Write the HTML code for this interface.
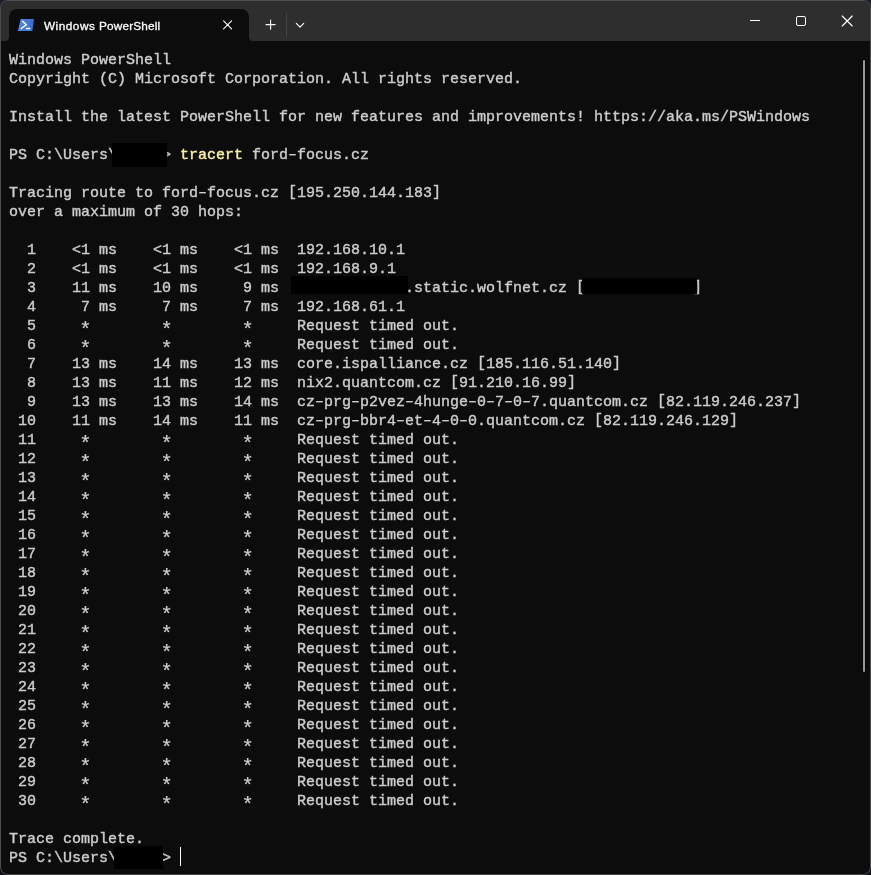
<!DOCTYPE html>
<html lang="en">
<head>
<meta charset="utf-8">
<title>Windows PowerShell</title>
<style>
html,body{margin:0;padding:0;}
body{width:871px;height:875px;overflow:hidden;background:linear-gradient(#1c1e2a 0,#1c1e2a 50%,#0e1014 50%,#0e1014 100%);position:relative;}
.win{position:absolute;left:0;top:0;width:869px;height:873px;border:1px solid;border-color:#4f4f54 #4c4d4f #444444 #4c4e4d;border-radius:8px;background:#0c0c0c;overflow:hidden;}
.titlebar{position:absolute;left:0;top:0;width:869px;height:40px;background:#2e2e2e;}
.tab{position:absolute;left:8px;top:8px;width:240px;height:32px;background:#0c0c0c;border-radius:8px 8px 0 0;}
.tab:before,.tab:after{content:"";position:absolute;bottom:0;width:4px;height:4px;}
.tab:before{left:-4px;background:radial-gradient(circle at 0 0,rgba(12,12,12,0) 3.5px,#0c0c0c 4.5px);}
.tab:after{right:-4px;background:radial-gradient(circle at 100% 0,rgba(12,12,12,0) 3.5px,#0c0c0c 4.5px);}
.tabtitle{position:absolute;left:35px;top:9px;font:11.8px/16px "Liberation Sans",sans-serif;color:#fff;white-space:nowrap;letter-spacing:0.33px;will-change:transform;-webkit-text-stroke:0.3px;}
.ico{position:absolute;}
.sep{position:absolute;left:285px;top:12px;width:1px;height:24px;background:#454545;}
pre{position:absolute;left:8px;top:50px;will-change:transform;-webkit-text-stroke:0.4px;margin:0;font-family:"Liberation Mono", "DejaVu Sans Mono", monospace;font-size:15px;line-height:19px;color:#cccccc;white-space:pre;letter-spacing:-0.0015px;}
.y{color:#f9f1a5;}
.k{position:relative;top:-1px;}
.h{display:inline-block;transform:scaleX(1.55);-webkit-text-stroke:0.2px;}
.a{font-size:20.5px;margin:0 -1.65px;position:relative;top:5.5px;line-height:0;-webkit-text-stroke:0.2px;}
.blk{position:absolute;background:#000;}
.cursor{position:absolute;left:179px;top:846px;width:1px;height:19px;background:#ffffff;}
.thumb{position:absolute;left:862px;top:59px;width:2px;height:612px;background:#9a9a9a;border-radius:1px;box-shadow:0 0 0 1px #040404;}
</style>
</head>
<body>
<div class="win">
<div class="titlebar">
<div class="tab">
<svg class="ico" style="left:9px;top:10px" width="17" height="13" viewBox="0 0 17 13"><defs><linearGradient id="g" x1="0" y1="0" x2="1" y2="0"><stop offset="0" stop-color="#4d88ea"/><stop offset="1" stop-color="#3a6dc9"/></linearGradient></defs><path d="M2.6 0 H16 L14.3 12 H0 Z" fill="url(#g)"/><path d="M4.5 2.3 L8.3 5.8 L3.3 9.5" fill="none" stroke="#fff" stroke-width="1.4" stroke-linecap="round" stroke-linejoin="miter"/><path d="M8.4 9.5 H11.8" fill="none" stroke="#fff" stroke-width="1.4" stroke-linecap="round"/></svg>
<div class="tabtitle"><span style="letter-spacing:0.49px">Windows</span> <span style="letter-spacing:0.18px">PowerShell</span></div>
<svg class="ico" style="left:213px;top:9.5px" width="12" height="12" viewBox="0 0 12 12"><path d="M1.6 1.9 L9.6 9.9 M9.6 1.9 L1.6 9.9" stroke="#fff" stroke-width="1.1" fill="none" stroke-linecap="round"/></svg>
</div>
<svg class="ico" style="left:263px;top:17px" width="14" height="14" viewBox="0 0 14 14"><path d="M6.6 2 V11.2 M2 6.6 H11.2" stroke="#fff" stroke-width="1.1" fill="none" stroke-linecap="round"/></svg>
<div class="sep"></div>
<svg class="ico" style="left:293px;top:19.5px" width="12" height="10" viewBox="0 0 12 10"><path d="M2.3 2.4 L6 6.1 L9.7 2.4" stroke="#fff" stroke-width="1.1" fill="none" stroke-linecap="round" stroke-linejoin="round"/></svg>
<svg class="ico" style="left:747px;top:13px" width="14" height="14" viewBox="0 0 14 14"><path d="M2 6.5 H12" stroke="#fff" stroke-width="1" fill="none"/></svg>
<svg class="ico" style="left:793px;top:13px" width="14" height="14" viewBox="0 0 14 14"><rect x="2.5" y="2.5" width="9" height="9" rx="1.5" stroke="#fff" stroke-width="1" fill="none"/></svg>
<svg class="ico" style="left:839px;top:13px" width="14" height="14" viewBox="0 0 14 14"><path d="M2.2 2 L12.2 12 M12.2 2 L2.2 12" stroke="#fff" stroke-width="1.15" fill="none" stroke-linecap="round"/></svg>
</div>
<pre>Windows PowerShell
Copyright (C) Microsoft Corporation. All rights reserved.

Install the latest PowerShell for new features and improvements! https://aka.ms/PSWindows

PS C:\Users\     &gt; <span class="y">tracert</span> ford<span class="h">-</span>focus.cz

Tracing route to ford<span class="h">-</span>focus.cz <span class="k">[</span>195.250.144.183<span class="k">]</span>
over a maximum of 30 hops:

  1    &lt;1 ms    &lt;1 ms    &lt;1 ms  192.168.10.1
  2    &lt;1 ms    &lt;1 ms    &lt;1 ms  192.168.9.1
  3    11 ms    10 ms     9 ms              .static.wolfnet.cz <span class="k">[</span>            <span class="k">]</span>
  4     7 ms     7 ms     7 ms  192.168.61.1
  5     <span class="a">*</span>        <span class="a">*</span>        <span class="a">*</span>     Request timed out.
  6     <span class="a">*</span>        <span class="a">*</span>        <span class="a">*</span>     Request timed out.
  7    13 ms    14 ms    13 ms  core.ispalliance.cz <span class="k">[</span>185.116.51.140<span class="k">]</span>
  8    13 ms    11 ms    12 ms  nix2.quantcom.cz <span class="k">[</span>91.210.16.99<span class="k">]</span>
  9    13 ms    13 ms    14 ms  cz<span class="h">-</span>prg<span class="h">-</span>p2vez<span class="h">-</span>4hunge<span class="h">-</span>0<span class="h">-</span>7<span class="h">-</span>0<span class="h">-</span>7.quantcom.cz <span class="k">[</span>82.119.246.237<span class="k">]</span>
 10    11 ms    14 ms    11 ms  cz<span class="h">-</span>prg<span class="h">-</span>bbr4<span class="h">-</span>et<span class="h">-</span>4<span class="h">-</span>0<span class="h">-</span>0.quantcom.cz <span class="k">[</span>82.119.246.129<span class="k">]</span>
 11     <span class="a">*</span>        <span class="a">*</span>        <span class="a">*</span>     Request timed out.
 12     <span class="a">*</span>        <span class="a">*</span>        <span class="a">*</span>     Request timed out.
 13     <span class="a">*</span>        <span class="a">*</span>        <span class="a">*</span>     Request timed out.
 14     <span class="a">*</span>        <span class="a">*</span>        <span class="a">*</span>     Request timed out.
 15     <span class="a">*</span>        <span class="a">*</span>        <span class="a">*</span>     Request timed out.
 16     <span class="a">*</span>        <span class="a">*</span>        <span class="a">*</span>     Request timed out.
 17     <span class="a">*</span>        <span class="a">*</span>        <span class="a">*</span>     Request timed out.
 18     <span class="a">*</span>        <span class="a">*</span>        <span class="a">*</span>     Request timed out.
 19     <span class="a">*</span>        <span class="a">*</span>        <span class="a">*</span>     Request timed out.
 20     <span class="a">*</span>        <span class="a">*</span>        <span class="a">*</span>     Request timed out.
 21     <span class="a">*</span>        <span class="a">*</span>        <span class="a">*</span>     Request timed out.
 22     <span class="a">*</span>        <span class="a">*</span>        <span class="a">*</span>     Request timed out.
 23     <span class="a">*</span>        <span class="a">*</span>        <span class="a">*</span>     Request timed out.
 24     <span class="a">*</span>        <span class="a">*</span>        <span class="a">*</span>     Request timed out.
 25     <span class="a">*</span>        <span class="a">*</span>        <span class="a">*</span>     Request timed out.
 26     <span class="a">*</span>        <span class="a">*</span>        <span class="a">*</span>     Request timed out.
 27     <span class="a">*</span>        <span class="a">*</span>        <span class="a">*</span>     Request timed out.
 28     <span class="a">*</span>        <span class="a">*</span>        <span class="a">*</span>     Request timed out.
 29     <span class="a">*</span>        <span class="a">*</span>        <span class="a">*</span>     Request timed out.
 30     <span class="a">*</span>        <span class="a">*</span>        <span class="a">*</span>     Request timed out.

Trace complete.
PS C:\Users\     &gt; </pre>
<div class="blk" style="left:111px;top:142px;width:55px;height:24px"></div>
<div class="blk" style="left:290px;top:275px;width:117px;height:18px"></div>
<div class="blk" style="left:581px;top:277px;width:115px;height:16px"></div>
<div class="blk" style="left:113px;top:845px;width:49px;height:23px"></div>
<div class="cursor"></div>
<div class="thumb"></div>
</div>
</body>
</html>
